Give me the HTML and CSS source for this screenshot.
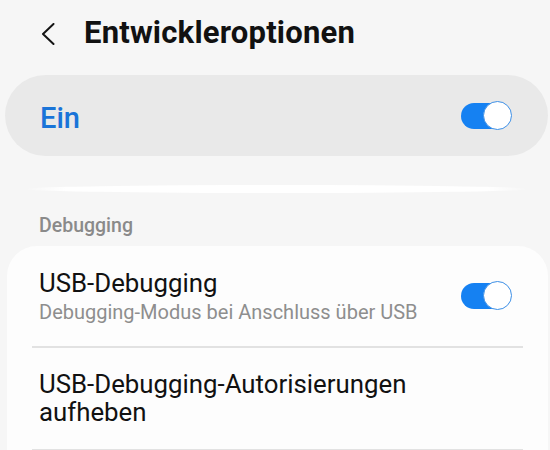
FILE: index.html
```html
<!DOCTYPE html>
<html lang="de">
<head>
<meta charset="utf-8">
<link rel="stylesheet" href="styles.css">
</head>
<body>
<div class="screen">
  <header class="header">
    <svg class="back" width="14" height="22" viewBox="0 0 14 22"><path d="M12.5 1 L2 11 L12.5 21" fill="none" stroke="#141414" stroke-width="2" stroke-linecap="round" stroke-linejoin="round"/></svg>
    <h1 class="title">Entwickleroptionen</h1>
  </header>

  <div class="master">
    <span class="master-label">Ein</span>
    <div class="toggle"></div>
  </div>

  <div class="strip"></div>

  <div class="section-label">Debugging</div>

  <div class="card">
    <div class="row">
      <div class="row-text">
        <div class="row-title">USB-Debugging</div>
        <div class="row-sub">Debugging-Modus bei Anschluss über USB</div>
      </div>
      <div class="toggle"></div>
    </div>
    <div class="divider"></div>
    <div class="row row-plain">
      <div class="row-title">USB-Debugging-Autorisierungen<br>aufheben</div>
    </div>
    <div class="divider"></div>
  </div>
</div>
</body>
</html>
```

FILE: styles.css
```css
html, body {
  margin: 0;
  padding: 0;
  background: #f6f6f6;
}
body {
  font-family: Roboto, "Noto Sans", sans-serif;
  width: 550px;
  height: 450px;
  overflow: hidden;
}
.screen {
  display: flex;
  flex-direction: column;
}
.header {
  display: flex;
  align-items: center;
  padding: 15px 0 0 41px;
  height: 36px;
}
.back {
  display: block;
  margin-top: 1px;
}
.title {
  margin: 0 0 0 29px;
  font-size: 31px;
  line-height: 36px;
  font-weight: 700;
  color: #111111;
  letter-spacing: 0.2px;
}
.master {
  margin: 24px 2px 0 5px;
  height: 81px;
  border-radius: 41px;
  background: #e9e9e9;
  display: flex;
  align-items: center;
  justify-content: space-between;
  padding: 0 39px 0 35px;
}
.master-label {
  font-size: 29px;
  line-height: 34px;
  font-weight: 500;
  color: #1a74d8;
  padding-top: 5px;
}
.toggle {
  position: relative;
  width: 48px;
  height: 26px;
  border-radius: 13px;
  background: #1581f2;
  flex-shrink: 0;
}
.toggle::after {
  content: "";
  position: absolute;
  right: -3px;
  top: -2px;
  width: 27px;
  height: 27px;
  border-radius: 50%;
  background: #ffffff;
  border: 1.5px solid #3d8fe6;
}
.strip {
  margin: 29px 22px 0 25px;
  height: 8px;
  border-radius: 50%;
  background: linear-gradient(to right, rgba(255,255,255,0), #ffffff 8%, #ffffff 92%, rgba(255,255,255,0));
}
.section-label {
  margin: 21px 0 0 39px;
  font-size: 19.5px;
  line-height: 24px;
  font-weight: 500;
  color: #8a8a8a;
}
.card {
  margin: 8px 2px 0 7px;
  background: #fdfdfd;
  border-radius: 30px 30px 0 0;
  padding: 0 25px;
  height: 220px;
}
.row {
  display: flex;
  align-items: center;
  justify-content: space-between;
  padding: 0 14px 0 7px;
  height: 100px;
}
.row-title {
  font-size: 25.8px;
  line-height: 28px;
  color: #111111;
}
.row-sub {
  font-size: 20px;
  line-height: 24px;
  color: #8e8e8e;
  margin-top: 3px;
}
.row-plain {
  height: 101px;
  padding-top: 0;
}
.divider {
  height: 1.5px;
  background: #e2e2e2;
}
```
